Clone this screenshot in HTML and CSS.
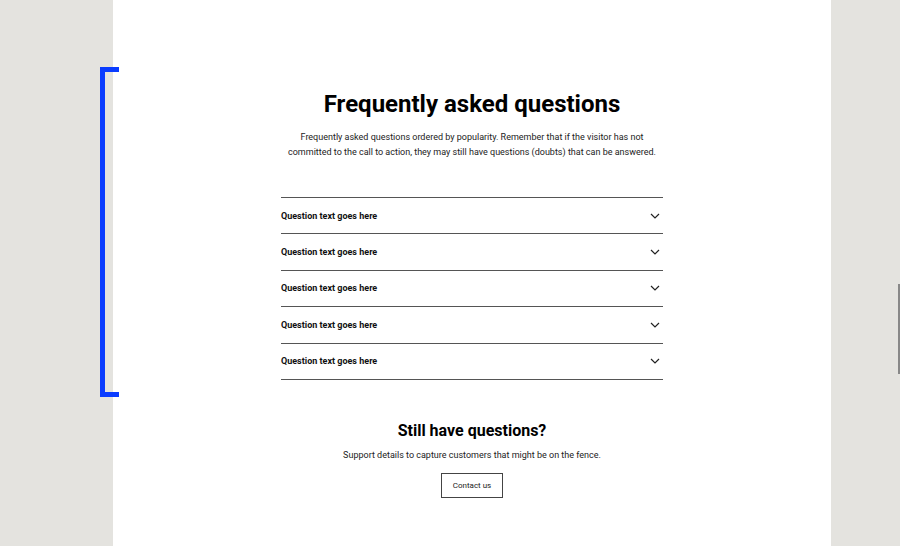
FILE: index.html
```html
<!DOCTYPE html>
<html>
<head>
  <meta charset="utf-8">
  <link rel="stylesheet" href="styles.css">
</head>
<body>
  <div class="bracket"></div>
  <div class="edge-line"></div>
  <div class="page">
    <div class="panel">
      <h1 class="title">Frequently asked questions</h1>
      <p class="intro">Frequently asked questions ordered by popularity. Remember that if the visitor has not<br>committed to the call to action, they may still have questions (doubts) that can be answered.</p>

      <div class="faq">
        <div class="faq-item"><span>Question text goes here</span><svg class="chevron" viewBox="0 0 10 6"><path d="M1 1l4 4 4-4"/></svg></div>
        <div class="faq-item"><span>Question text goes here</span><svg class="chevron" viewBox="0 0 10 6"><path d="M1 1l4 4 4-4"/></svg></div>
        <div class="faq-item"><span>Question text goes here</span><svg class="chevron" viewBox="0 0 10 6"><path d="M1 1l4 4 4-4"/></svg></div>
        <div class="faq-item"><span>Question text goes here</span><svg class="chevron" viewBox="0 0 10 6"><path d="M1 1l4 4 4-4"/></svg></div>
        <div class="faq-item"><span>Question text goes here</span><svg class="chevron" viewBox="0 0 10 6"><path d="M1 1l4 4 4-4"/></svg></div>
      </div>

      <h2 class="subtitle">Still have questions?</h2>
      <p class="support">Support details to capture customers that might be on the fence.</p>
      <button class="contact">Contact us</button>
    </div>
  </div>
</body>
</html>
```

FILE: styles.css
```css
body {
  margin: 0;
  padding: 0;
  background-color: #e4e3df;
  font-family: Roboto, "Liberation Sans", sans-serif;
  color: #111;
  width: 900px;
  height: 546px;
  overflow: hidden;
}

.page {
  display: flex;
  height: 546px;
}

.panel {
  margin-left: 113px;
  width: 718px;
  background-color: #fff;
  display: flex;
  flex-direction: column;
  align-items: center;
  padding-top: 89px;
  box-sizing: border-box;
}

.title {
  margin: 0;
  font-size: 24px;
  line-height: 30px;
  font-weight: 700;
  color: #000;
}

.intro {
  margin: 11px 0 0;
  font-size: 9px;
  line-height: 15px;
  text-align: center;
  color: #222;
}

.faq {
  margin-top: 37px;
  width: 382px;
  border-top: 1px solid #555;
}

.faq-item {
  display: flex;
  justify-content: space-between;
  align-items: center;
  height: 35.4px;
  border-bottom: 1px solid #555;
  font-size: 9px;
  font-weight: 700;
  color: #111;
}

.chevron {
  width: 10px;
  height: 6px;
  margin-right: 3px;
  fill: none;
  stroke: #222;
  stroke-width: 1.2;
}

.subtitle {
  margin: 40px 0 0;
  font-size: 16px;
  line-height: 22px;
  font-weight: 700;
  color: #000;
}

.support {
  margin: 6px 0 0;
  font-size: 9px;
  line-height: 15px;
  color: #222;
}

.contact {
  margin-top: 10px;
  width: 62px;
  height: 25px;
  padding: 0;
  background: #fff;
  border: 1px solid #444;
  font-family: inherit;
  font-size: 8px;
  color: #222;
}

.bracket {
  position: absolute;
  left: 100px;
  top: 67px;
  width: 14px;
  height: 320px;
  border: 5px solid #0a3cff;
  border-right: none;
}

.edge-line {
  position: absolute;
  left: 898px;
  top: 284px;
  width: 2px;
  height: 90px;
  background-color: #888;
}
```
